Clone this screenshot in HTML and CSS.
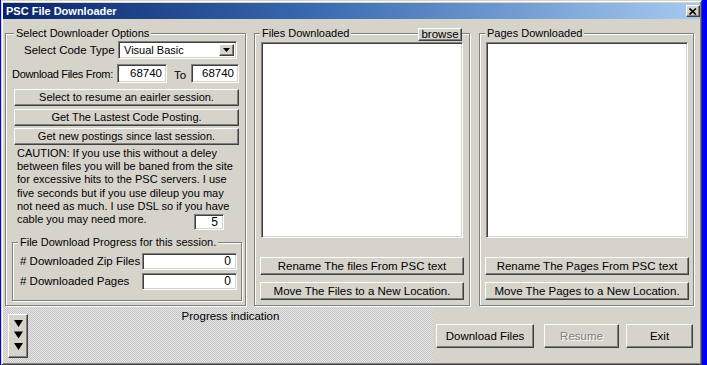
FILE: index.html
```html
<!DOCTYPE html>
<html>
<head>
<meta charset="utf-8">
<title>PSC File Downloader</title>
<link rel="stylesheet" href="styles.css">
</head>
<body>
<div class="window">
  <div class="titlebar">
    <span class="title">PSC File Downloader</span>
    <span class="close-btn"><svg width="8" height="7" viewBox="0 0 8 7"><path d="M0.5 0.5 L7 6.5 M7 0.5 L0.5 6.5" stroke="#000" stroke-width="1.6"/></svg></span>
  </div>
  <div class="main">
    <div class="frame frame-left">
      <span class="legend lg-left">Select Downloader Options</span>
      <div class="row row-type">
        <span class="lbl-type">Select Code Type</span>
        <div class="field select">
          <span class="select-val">Visual Basic</span>
          <span class="btn select-btn"><svg width="7" height="4" viewBox="0 0 7 4"><path d="M0 0 H7 L3.5 4 Z" fill="#000"/></svg></span>
        </div>
      </div>
      <div class="row row-range">
        <span class="lbl-from">Download Files From:</span>
        <div class="field num w-from">68740</div>
        <span class="lbl-to">To</span>
        <div class="field num w-to">68740</div>
      </div>
      <div class="btn b-wide b1">Select to resume an eairler session.</div>
      <div class="btn b-wide b2">Get The Lastest Code Posting.</div>
      <div class="btn b-wide b3">Get new postings since last session.</div>
      <div class="caution">
        <div>CAUTION: If you use this without a deley</div>
        <div>between files you will be baned from the site</div>
        <div>for excessive hits to the PSC servers. I use</div>
        <div>five seconds but if you use dileup you may</div>
        <div>not need as much. I use DSL so if you have</div>
        <div class="last-line"><span>cable you may need more.</span><div class="field num w-delay">5</div></div>
      </div>
      <div class="frame group">
        <span class="legend lg-group">File Download Progress for this session.</span>
        <div class="prow"><span class="plbl"># Downloaded Zip Files</span><div class="field num w-count">0</div></div>
        <div class="prow prow2"><span class="plbl"># Downloaded Pages</span><div class="field num w-count">0</div></div>
      </div>
    </div>

    <div class="frame frame-list frame-files">
      <span class="legend lg-list">Files Downloaded</span>
      <span class="btn browse">browse</span>
      <div class="field listbox"></div>
      <div class="btn b-list b-first">Rename The files From PSC text</div>
      <div class="btn b-list b-second">Move The Files to a New Location.</div>
    </div>

    <div class="frame frame-list frame-pages">
      <span class="legend lg-list">Pages Downloaded</span>
      <div class="field listbox"></div>
      <div class="btn b-list b-first">Rename The Pages From PSC text</div>
      <div class="btn b-list b-second">Move The Pages to a New Location.</div>
    </div>
  </div>

  <div class="bottom">
    <div class="progress-area">
      <div class="btn tri-btn">
        <svg width="18" height="42" viewBox="0 0 18 42"><path d="M5 5 H14 L9.5 12 Z M5 16.5 H14 L9.5 23.5 Z M5 28 H14 L9.5 35 Z" fill="#000"/></svg>
      </div>
      <div class="progress-text">Progress indication</div>
    </div>
    <div class="btn b-bottom b-dl">Download Files</div>
    <div class="btn b-bottom b-resume">Resume</div>
    <div class="btn b-bottom b-exit">Exit</div>
  </div>
</div>
</body>
</html>
```

FILE: styles.css
```css
html, body {
  margin: 0;
  padding: 0;
}
body {
  background: #0000f4;
  width: 707px;
  height: 365px;
  overflow: hidden;
  font-family: "Liberation Sans", Arial, sans-serif;
  font-size: 11px;
  color: #000;
}
.window {
  margin-left: 1px;
  width: 701px;
  height: 365px;
  box-sizing: border-box;
  background: #d6d3cb;
  border: 1px solid;
  border-color: #d6d3cb #404040 #404040 #d6d3cb;
  box-shadow: inset 1px 1px 0 #fff, inset -1px -1px 0 #808080;
  padding: 2px 1px 2px 1px;
  display: flex;
  flex-direction: column;
}
.titlebar {
  height: 16px;
  flex: none;
  background: linear-gradient(90deg, #0a246a 0%, #3a6ab0 45%, #a6caf0 100%);
  display: flex;
  align-items: center;
  justify-content: space-between;
  padding-left: 3px;
}
.title {
  color: #fff;
  font-weight: bold;
  font-size: 11px;
  line-height: 13px;
}
.close-btn {
  width: 14px;
  height: 12px;
  box-sizing: border-box;
  background: #d6d3cb;
  border: 1px solid;
  border-color: #fff #404040 #404040 #fff;
  box-shadow: inset -1px -1px 0 #808080;
  display: flex;
  align-items: center;
  justify-content: center;
}
.close-btn svg { display: block; }

.main {
  display: flex;
  margin-top: 14px;
  flex: none;
}
.frame {
  position: relative;
  box-sizing: border-box;
  border: 1px solid #808080;
  box-shadow: inset 1px 1px 0 #fff, 1px 1px 0 #fff;
}
.legend {
  position: absolute;
  top: -7px;
  background: #d6d3cb;
  padding: 0 2px;
  line-height: 13px;
  white-space: nowrap;
}
.lg-left { left: 8px; }
.lg-list { left: 5px; }
.lg-group { left: 5px; }

.btn {
  box-sizing: border-box;
  background: #d6d3cb;
  border: 1px solid;
  border-color: #fff #404040 #404040 #fff;
  box-shadow: inset -1px -1px 0 #808080;
  display: flex;
  align-items: center;
  justify-content: center;
  white-space: nowrap;
  line-height: 13px;
}
.field {
  box-sizing: border-box;
  background: #fff;
  border: 1px solid;
  border-color: #808080 #fff #fff #808080;
  box-shadow: inset 1px 1px 0 #404040, inset -1px -1px 0 #d6d3cb;
  flex: none;
}
.num {
  display: flex;
  align-items: center;
  justify-content: flex-end;
  padding-right: 4px;
  line-height: 13px;
}

/* left frame */
.frame-left {
  margin-left: 2px;
  width: 241px;
  height: 273px;
  padding: 7px 6px 0 8px;
  display: flex;
  flex-direction: column;
  flex: none;
}
.row {
  display: flex;
  align-items: center;
  white-space: nowrap;
}
.row > span { flex: none; }
.row-type { height: 18px; }
.lbl-type {
  margin-left: 10px;
  width: 94px;
  font-size: 11.5px;
}
.select {
  width: 119px;
  height: 18px;
  display: flex;
  align-items: stretch;
  padding: 2px;
}
.select-val {
  flex: 1 1 auto;
  padding-left: 3px;
  display: flex;
  align-items: center;
}
.select-btn {
  width: 15px;
  flex: none;
}
.select-btn svg { display: block; }

.row-range {
  height: 19px;
  margin-top: 5px;
}
.lbl-from {
  margin-left: -2px;
  width: 105px;
  font-size: 11px;
  letter-spacing: -0.3px;
}
.w-from { width: 50px; height: 19px; font-size: 11.5px; }
.lbl-to {
  margin-left: 7px;
  width: 17px;
  padding-top: 3px;
  font-size: 11.5px;
}
.w-to { width: 48px; height: 19px; font-size: 11.5px; }

.b-wide { height: 17px; flex: none; }
.b1 { margin-top: 6px; }
.b2 { margin-top: 3px; }
.b3 { margin-top: 2px; }

.caution {
  margin-top: 2px;
  padding-left: 3px;
  line-height: 13.2px;
  white-space: nowrap;
  flex: none;
}
.last-line {
  display: flex;
  height: 13px;
}
.w-delay {
  width: 30px;
  height: 16px;
  margin-left: auto;
  margin-right: 15px;
  margin-top: 1px;
  padding-right: 5px;
  font-size: 12px;
}

.group {
  margin-top: 16px;
  margin-left: -2px;
  width: 230px;
  height: 59px;
  padding: 10px 4px 0 7px;
  flex: none;
}
.prow {
  display: flex;
  align-items: center;
  height: 16px;
  white-space: nowrap;
}
.prow2 { margin-top: 4px; }
.plbl { width: 122px; flex: none; font-size: 11.5px; }
.w-count { width: 95px; height: 17px; padding-right: 5px; font-size: 12px; }

/* list frames */
.frame-list {
  width: 216px;
  height: 273px;
  padding: 8px 6px 0 6px;
  display: flex;
  flex-direction: column;
  flex: none;
}
.frame-files { margin-left: 8px; }
.frame-pages { margin-left: 9px; width: 215px; }
.browse {
  position: absolute;
  top: -6px;
  right: 7px;
  width: 44px;
  height: 13px;
  line-height: 11px;
  font-size: 11.5px;
}
.listbox {
  width: 202px;
  height: 196px;
}
.b-list {
  width: 204px;
  height: 18px;
  margin-left: -1px;
  flex: none;
  font-size: 11.5px;
}
.b-first { margin-top: 19px; }
.b-second { margin-top: 7px; }

/* bottom */
.bottom {
  display: flex;
  margin-top: 1px;
  height: 55px;
  flex: none;
}
.progress-area {
  margin-left: 1px;
  width: 429px;
  height: 55px;
  display: flex;
  flex: none;
  background: repeating-conic-gradient(#c4c4c4 0 25%, #e6e6e6 0 50%) 0 0 / 2px 2px;
}
.tri-btn {
  margin-left: 4px;
  margin-top: 7px;
  width: 20px;
  height: 44px;
  flex: none;
}
.tri-btn svg { display: block; }
.progress-text {
  flex: 1;
  text-align: center;
  padding-top: 3px;
  line-height: 13px;
  font-size: 11.5px;
}
.b-bottom {
  margin-top: 17px;
  height: 24px;
  font-size: 11.5px;
  flex: none;
}
.b-dl { margin-left: 3px; width: 98px; }
.b-resume {
  margin-left: 10px;
  width: 75px;
  color: #808080;
  text-shadow: 1px 1px 0 #fff;
}
.b-exit { margin-left: 7px; width: 67px; }
```
